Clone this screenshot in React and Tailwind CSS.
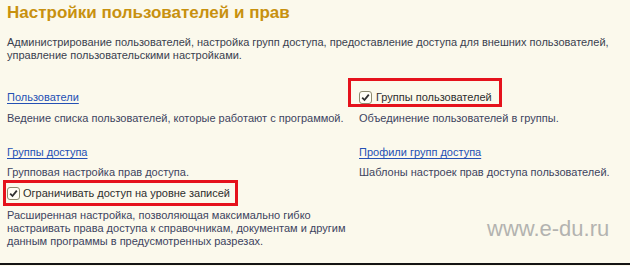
import React from "react";

const Check = () => (
  <span className="w-[13px] h-[13px] shrink-0 rounded-[3px] border border-[#8d8b6f] bg-[#fffef6] flex items-center justify-center">
    <svg width="9" height="9" viewBox="0 0 9 9">
      <path d="M1.2 4.6 L3.5 7 L7.8 1.6" fill="none" stroke="#2f2f2f" strokeWidth="1.8" />
    </svg>
  </span>
);

const Link = ({ children }) => (
  <a href="#" className="text-[#2450b4] underline underline-offset-[2px] decoration-[1px]">
    {children}
  </a>
);

const App = () => {
  return (
    <div className="w-[630px] h-[266px] bg-[#fbf9ec] flex flex-col font-['Liberation_Sans',Arial,sans-serif] text-[11px] leading-[13px] text-[#3d4460] overflow-hidden">
      <div className="flex-1 px-[7px] pt-[3px]">
        <h1 className="text-[17px] leading-[20px] font-bold text-[#c8910f]">Настройки пользователей и прав</h1>
        <p className="mt-[13px] text-[#3a3f4f]">
          Администрирование пользователей, настройка групп доступа, предоставление доступа для внешних пользователей,
          <br />
          управление пользовательскими настройками.
        </p>

        <div className="grid grid-cols-[352px_1fr] mt-[29px]">
          <div>
            <Link>Пользователи</Link>
          </div>
          <div className="relative flex items-center gap-[4px] h-[13px]">
            <span className="absolute left-[-11px] top-[-13px] w-[154px] h-[29px] border-[3px] border-[#e5121c]" />
            <Check />
            <span className="text-[#2e2e2e]">Группы пользователей</span>
          </div>

          <p className="mt-[8px]">Ведение списка пользователей, которые работают с программой.</p>
          <p className="mt-[8px]">Объединение пользователей в группы.</p>

          <div className="mt-[21px]">
            <Link>Группы доступа</Link>
          </div>
          <div className="mt-[21px]">
            <Link>Профили групп доступа</Link>
          </div>

          <p className="mt-[7px]">Групповая настройка прав доступа.</p>
          <p className="mt-[7px]">Шаблоны настроек прав доступа пользователей.</p>

          <div className="mt-[8px] relative flex items-center gap-[3px] h-[13px]">
            <span className="absolute left-[-4px] top-[-7px] w-[235px] h-[26px] border-[3px] border-[#e5121c]" />
            <Check />
            <span className="text-[#2e2e2e]">Ограничивать доступ на уровне записей</span>
          </div>
          <div />

          <p className="mt-[9px]">
            Расширенная настройка, позволяющая максимально гибко
            <br />
            настраивать права доступа к справочникам, документам и другим
            <br />
            данным программы в предусмотренных разрезах.
          </p>
          <div className="mt-[18px] pl-[128px]">
            <span className="text-[22px] leading-[22px] text-[#b3b3b0] whitespace-nowrap">www.e-du.ru</span>
          </div>
        </div>
      </div>
      <div className="h-[2px] bg-[#141414]" />
      <div className="h-[1px]" />
    </div>
  );
};

export default App;
